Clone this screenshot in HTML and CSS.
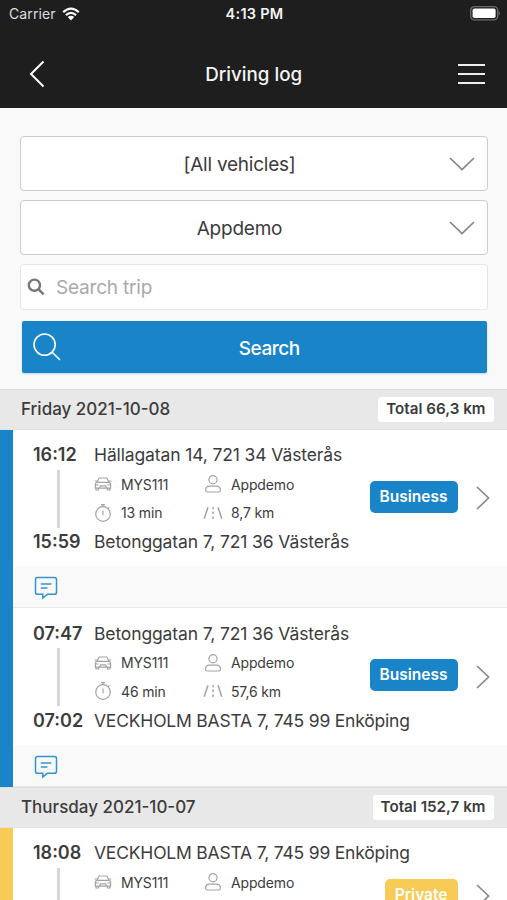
FILE: index.html
```html
<!DOCTYPE html>
<html lang="en">
<head>
<meta charset="utf-8">
<title>Driving log</title>
<link rel="stylesheet" href="styles.css">
</head>
<body>
<svg class="defs" width="0" height="0">
  <symbol id="car" viewBox="0 0 18 16"><path d="M3.2 6.4 4.6 2.9Q4.9 2 5.8 2H12.2Q13.1 2 13.4 2.9L14.8 6.4M1.4 12.2V8.4Q1.4 6.4 3.4 6.4H14.6Q16.6 6.4 16.6 8.4V12.2ZM2 12.2V14H4.6V12.2M13.4 12.2V14H16V12.2M.6 5H3.4M14.6 5H17.4M5.6 12.2 6.4 9.8H11.6L12.4 12.2M1.6 9H4.6M13.4 9H16.4"/></symbol>
  <symbol id="person" viewBox="0 0 18 20"><circle cx="9" cy="5.8" r="4.1"/><path d="M1.6 16.2Q1.6 12.2 5.6 12.2H12.4Q16.4 12.2 16.4 16.2Q16.4 18 14.6 18H3.4Q1.6 18 1.6 16.2Z"/></symbol>
  <symbol id="watch" viewBox="0 0 18 20"><circle cx="9" cy="11" r="7.3"/><path d="M9 3.7V1.8M7 1.6H11M9 7.6V12.2M14.2 5.6 15.4 4.4"/></symbol>
  <symbol id="road" viewBox="0 0 20 14"><path d="M5 1.2 1.2 12.8M15 1.2 18.8 12.8M10 1V3.2M10 5.6V8M10 10.4V13"/></symbol>
  <symbol id="note" viewBox="0 0 24 24"><path d="M3.6 1.5H20.4Q22.5 1.5 22.5 3.6V16.2Q22.5 18.3 20.4 18.3H13.4L8.8 22V18.3H3.6Q1.5 18.3 1.5 16.2V3.6Q1.5 1.5 3.6 1.5ZM6.8 8H17.4M6.8 12H13.4"/></symbol>
  <symbol id="next" viewBox="0 0 14 24"><path d="M1 1 12.6 12 1 23"/></symbol>
  <symbol id="down" viewBox="0 0 26 14"><path d="M1 1 13 12.6 25 1"/></symbol>
</svg>

<header class="top">
  <div class="status">
    <div class="carrier"><span>Carrier</span>
      <svg class="wifi" viewBox="0 0 18 14"><path d="M1.2 5.1Q9-1.9 16.8 5.1M3.9 8.1Q9 3.7 14.1 8.1"/><path class="fill" d="M5.8 10Q9 7.4 12.2 10L9 13.5Z"/></svg>
    </div>
    <div class="clock">4:13 PM</div>
    <div class="power"><svg class="battery" viewBox="0 0 30 15"><rect class="case" x=".7" y=".7" width="27" height="13.2" rx="3.6"/><rect class="charge" x="2.6" y="2.5" width="23" height="9.6" rx="1.8"/><path class="tip" d="M28.6 4.8Q31 7.3 28.6 9.8Z"/></svg></div>
  </div>
  <nav class="bar">
    <svg class="back" viewBox="0 0 16 28"><path d="M14.5 1.5 2 14 14.5 26.5"/></svg>
    <h1>Driving log</h1>
    <div class="menu"><i></i><i></i><i></i></div>
  </nav>
</header>

<section class="filters">
  <div class="select"><span>[All vehicles]</span><svg class="down"><use href="#down"/></svg></div>
  <div class="select"><span>Appdemo</span><svg class="down"><use href="#down"/></svg></div>
  <div class="field"><svg class="lens" viewBox="0 0 18 18"><circle cx="7.4" cy="7.2" r="5.6"/><path d="M11.4 11.2 16.6 16.4"/></svg><span>Search trip</span></div>
  <div class="button"><svg class="glass" viewBox="0 0 28 28"><circle cx="11.6" cy="11.6" r="10.6"/><path d="M19.2 19.2 27 27"/></svg><span>Search</span></div>
</section>

<main>
  <div class="day"><span>Friday 2021-10-08</span><b>Total 66,3 km</b></div>
  <article class="trip">
    <div class="body">
      <time>16:12</time><span class="addr">Hällagatan 14, 721 34 Västerås</span>
      <i class="line"></i>
      <div class="meta"><svg class="ic car"><use href="#car"/></svg><span>MYS111</span><svg class="ic person"><use href="#person"/></svg><span>Appdemo</span></div>
      <div class="meta"><svg class="ic watch"><use href="#watch"/></svg><span>13 min</span><svg class="ic road"><use href="#road"/></svg><span>8,7 km</span></div>
      <time>15:59</time><span class="addr">Betonggatan 7, 721 36 Västerås</span>
      <div class="end"><span class="tag">Business</span><svg class="next"><use href="#next"/></svg></div>
    </div>
    <div class="comment"><svg class="note"><use href="#note"/></svg></div>
  </article>
  <article class="trip">
    <div class="body">
      <time>07:47</time><span class="addr">Betonggatan 7, 721 36 Västerås</span>
      <i class="line"></i>
      <div class="meta"><svg class="ic car"><use href="#car"/></svg><span>MYS111</span><svg class="ic person"><use href="#person"/></svg><span>Appdemo</span></div>
      <div class="meta"><svg class="ic watch"><use href="#watch"/></svg><span>46 min</span><svg class="ic road"><use href="#road"/></svg><span>57,6 km</span></div>
      <time>07:02</time><span class="addr wide">VECKHOLM BASTA 7, 745 99 Enköping</span>
      <div class="end"><span class="tag">Business</span><svg class="next"><use href="#next"/></svg></div>
    </div>
    <div class="comment"><svg class="note"><use href="#note"/></svg></div>
  </article>
  <div class="day"><span>Thursday 2021-10-07</span><b>Total 152,7 km</b></div>
  <article class="trip private">
    <div class="body">
      <time>18:08</time><span class="addr wide">VECKHOLM BASTA 7, 745 99 Enköping</span>
      <i class="line"></i>
      <div class="meta"><svg class="ic car"><use href="#car"/></svg><span>MYS111</span><svg class="ic person"><use href="#person"/></svg><span>Appdemo</span></div>
      <div class="end"><span class="tag">Private</span><svg class="next"><use href="#next"/></svg></div>
    </div>
  </article>
</main>
</body>
</html>
```

FILE: styles.css
```css
* { box-sizing: border-box; }
html, body { height: 900px; overflow: hidden; }
body { margin: 0; background: #fff; color: #3c3c3c; font-family: Inter, "Liberation Sans", sans-serif; }
svg { display: block; fill: none; flex: none; }
.defs { position: absolute; }

.top { height: 107.5px; background: #1e1e1e; color: #f4f4f4; }
.status { height: 27px; display: grid; grid-template-columns: 1fr auto 1fr; align-items: center; padding: 0 7px 0 9px; }
.carrier { display: flex; align-items: center; gap: 6px; font-size: 14px; color: #dedede; letter-spacing: .1px; }
.wifi { width: 18px; height: 14px; stroke: #fff; stroke-width: 2.3; }
.wifi .fill { fill: #fff; stroke: none; }
.clock { font-size: 14.5px; font-weight: 600; letter-spacing: .25px; }
.power { display: flex; justify-content: flex-end; }
.battery { width: 30px; height: 15px; }
.case { stroke: #6b6b6b; stroke-width: 1.3; }
.charge { fill: #fff; }
.tip { fill: #6b6b6b; }
.bar { height: 80px; display: grid; grid-template-columns: 1fr auto 1fr; align-items: center; padding: 14px 22px 0 28.5px; }
.back { width: 16px; height: 28px; stroke: #fff; stroke-width: 2; }
h1 { margin: 0 6px 0 0; font-size: 18.8px; font-weight: 500; }
.menu { width: 27px; justify-self: end; display: grid; gap: 7px; }
.menu i { height: 2.3px; background: #eee; }

.filters { height: 281px; padding: 28.9px 19.5px 0 20px; background: #f9f9f9; display: flex; flex-direction: column; }
.select { height: 54.5px; margin-bottom: 9.5px; border: 1.5px solid #ccc; border-radius: 4px; background: #fff; display: flex; align-items: center; padding-right: 12px; font-size: 19px; letter-spacing: -.23px; }
.select span { flex: 1; text-align: center; padding: 2px 0 0 9.5px; }
.down { width: 26px; height: 14px; stroke: #858585; stroke-width: 1.7; }
.field { height: 46px; border: 1.5px solid #e5e5e5; border-radius: 4px; background: #fff; display: flex; align-items: center; padding-left: 6px; gap: 11px; color: #a9a9a9; font-size: 19px; letter-spacing: -.2px; }
.lens { width: 18px; height: 18px; stroke: #777; stroke-width: 2.4; }
.button { height: 52.5px; margin: 10.5px .5px 0 1.5px; border-radius: 2px; background: #1984c8; display: flex; align-items: center; color: #fff; font-size: 19px; font-weight: 500; letter-spacing: -.45px; padding: 0 0 0 11px; box-shadow: 0 1px 2px #b9d5e6; }
.button span { flex: 1; text-align: center; padding: 2px 9px 0 0; }
.glass { width: 28px; height: 28px; stroke: #fff; stroke-width: 1.6; }

.day { height: 41px; background: #e8e8e8; border-top: 1px solid #dedede; border-bottom: 1px solid #e2e2e2; display: flex; align-items: center; justify-content: space-between; padding: 0 13.5px 0 21px; font-size: 17px; font-weight: 500; }
.day b { height: 25px; line-height: 24px; padding: 0 8px; border-radius: 3px; background: #fff; font-size: 15.2px; font-weight: 600; }
.trip { border-left: 13px solid #1984c8; }
.private { border-color: #f7cb55; }
.body { height: 136.5px; padding: 10px 0 0 20px; display: grid; grid-template-columns: 61px 1fr; grid-template-rows: 30px 28.5px 28.5px 30px; align-items: center; position: relative; }
time { font-size: 18px; font-weight: 600; }
.addr { font-size: 17.5px; letter-spacing: -.13px; white-space: nowrap; }
.wide { letter-spacing: -.2px; }
.line { grid-column: 1; grid-row: 2 / 4; width: 3px; height: 58px; margin: 1px 0 0 24px; background: #d6d6d6; }
.meta { grid-column: 2; display: grid; grid-template-columns: 27px 83px 27px 1fr; align-items: center; padding-top: 1px; font-size: 14px; letter-spacing: -.15px; }
.ic { stroke: #a3a3a3; stroke-width: 1.2; width: 18px; height: 20px; }
.car { height: 16px; }
.road { width: 20px; height: 14px; margin-left: -1px; stroke-width: 1.5; }
.end { position: absolute; right: 17.5px; top: 51px; display: flex; align-items: center; gap: 18px; }
.tag { height: 32px; line-height: 31px; padding: 0 10px; border-radius: 5px; background: #1984c8; color: #fff; font-size: 15.5px; font-weight: 600; }
.private .tag { background: #f7cb55; }
.next { width: 14px; height: 24px; stroke: #858585; stroke-width: 1.6; margin-top: 3px; }
.comment { height: 42px; background: #f9f9f9; border-bottom: 1.5px solid #e7e7e7; padding: 10px 0 0 21px; }
.note { width: 24px; height: 24px; stroke: #3492cf; stroke-width: 1.5; }
```
